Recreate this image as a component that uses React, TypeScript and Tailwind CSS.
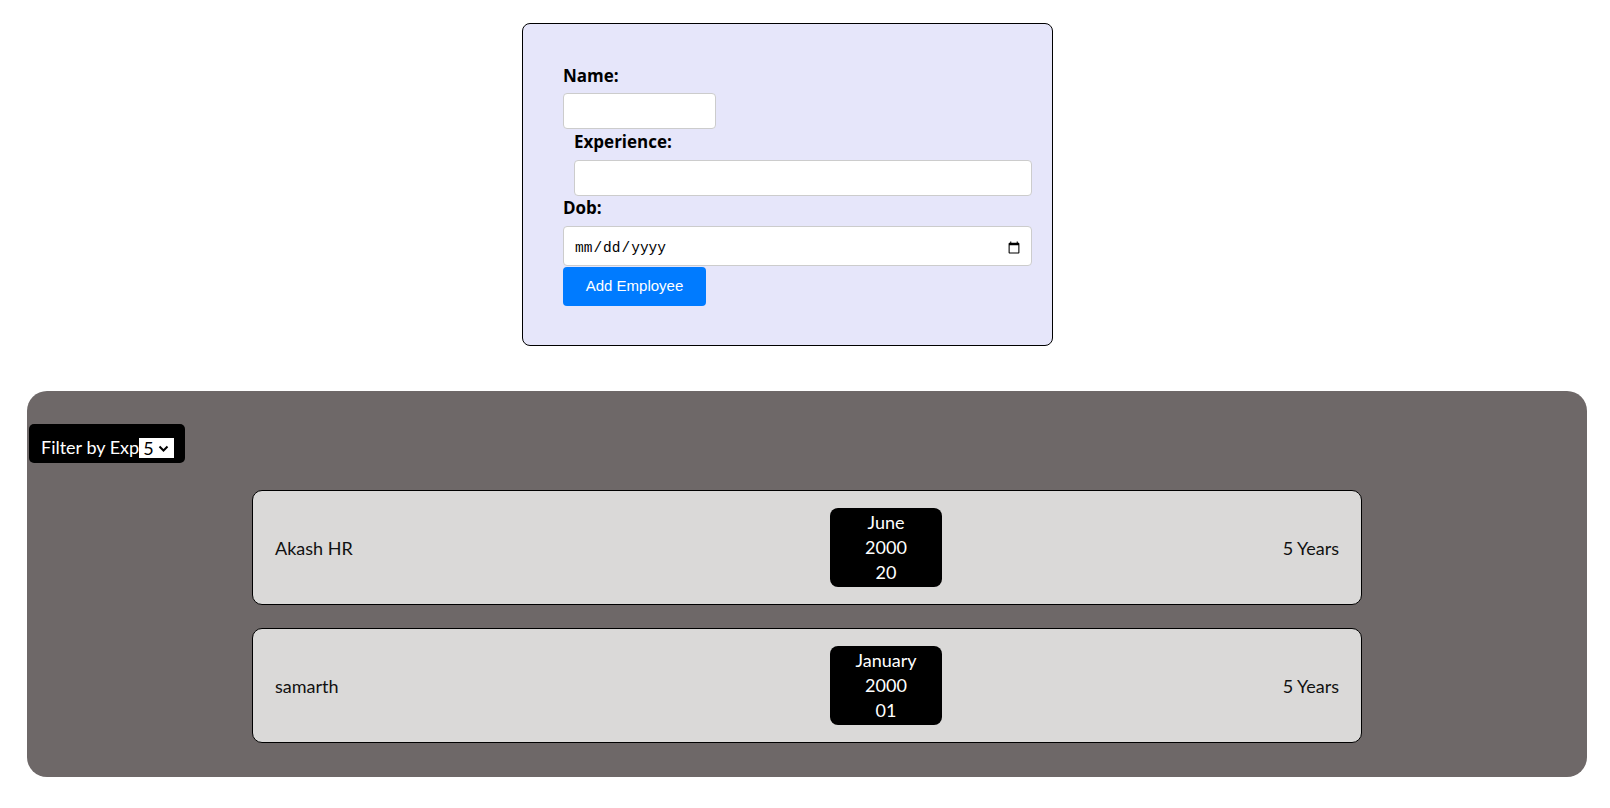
import React from "react";

type Employee = {
  name: string;
  month: string;
  year: string;
  day: string;
  exp: number;
};

const employees: Employee[] = [
  { name: "Akash HR", month: "June", year: "2000", day: "20", exp: 5 },
  { name: "samarth", month: "January", year: "2000", day: "01", exp: 5 },
];

const EmployeeForm = () => {
  return (
    <form
      className="mt-[23px] ml-[522px] w-[531px] rounded-[8px] border border-black bg-[#e6e6fa] pt-[40px] pr-[20px] pb-[39px] pl-[40px] font-['Open_Sans',sans-serif] text-black"
      onSubmit={(e) => e.preventDefault()}
    >
      <label className="block h-[24px] text-[17px] leading-[24px] font-bold">Name:</label>
      <input
        type="text"
        className="mt-[5px] block h-[36px] w-[153px] rounded-[4px] border border-[#cccccc] bg-white px-[10px] outline-none"
      />

      <div className="ml-[11px]">
        <label className="mt-[1px] block h-[24px] text-[17px] leading-[24px] font-bold">Experience:</label>
        <input
          type="number"
          className="mt-[6px] block h-[36px] w-full rounded-[4px] border border-[#cccccc] bg-white px-[10px] outline-none"
        />
      </div>

      <label className="block h-[24px] text-[17px] leading-[24px] font-bold">Dob:</label>
      <input
        type="date"
        className="mt-[6px] block h-[40px] w-full rounded-[4px] border border-[#cccccc] bg-white pt-[5px] pr-[8px] pl-[10px] font-['Liberation_Mono',monospace] text-[14.5px] text-black outline-none"
      />

      <button
        type="submit"
        className="mt-[1px] block h-[39px] w-[143px] rounded-[4px] bg-[#007bff] font-['Liberation_Sans',Arial,sans-serif] text-[15px] text-white"
      >
        Add Employee
      </button>
    </form>
  );
};

const EmployeeRow = ({ emp }: { emp: Employee }) => {
  return (
    <div className="mx-auto grid h-[115px] w-[1110px] grid-cols-[555px_112px_1fr] items-center rounded-[10px] border border-black bg-[#dad9d8] px-[22px] text-[18px] text-[#111111]">
      <div className="pt-[1px]">{emp.name}</div>
      <div className="flex h-[79px] flex-col items-center justify-center rounded-[8px] bg-black leading-[25px] text-white">
        <span>{emp.month}</span>
        <span>{emp.year}</span>
        <span>{emp.day}</span>
      </div>
      <div className="pt-[1px] text-right">{emp.exp} Years</div>
    </div>
  );
};

export default function App() {
  return (
    <div className="min-h-screen bg-white pb-[32px]">
      <EmployeeForm />

      <section className="mt-[45px] ml-[27px] w-[1560px] rounded-[20px] bg-[#6e6868] pt-[33px] pb-[34px] font-['Lato',sans-serif]">
        <div className="ml-[2px] flex h-[39px] w-[156px] items-start rounded-[5px] bg-black pt-[11px] pl-[12px] text-[18px] leading-[24px] text-white">
          <span>Filter by Exp</span>
          <span className="mt-[3px] flex h-[20px] w-[35px] items-center bg-white pl-[4px] leading-[20px] text-black">
            <span>5</span>
            <svg width="11" height="7" viewBox="0 0 11 7" className="ml-[4px]">
              <polyline points="1.5,1.5 5.5,5.5 9.5,1.5" fill="none" stroke="black" strokeWidth="2" />
            </svg>
          </span>
        </div>

        <div className="mt-[27px] flex flex-col gap-[23px]">
          {employees.map((emp) => (
            <EmployeeRow key={emp.name} emp={emp} />
          ))}
        </div>
      </section>
    </div>
  );
}
